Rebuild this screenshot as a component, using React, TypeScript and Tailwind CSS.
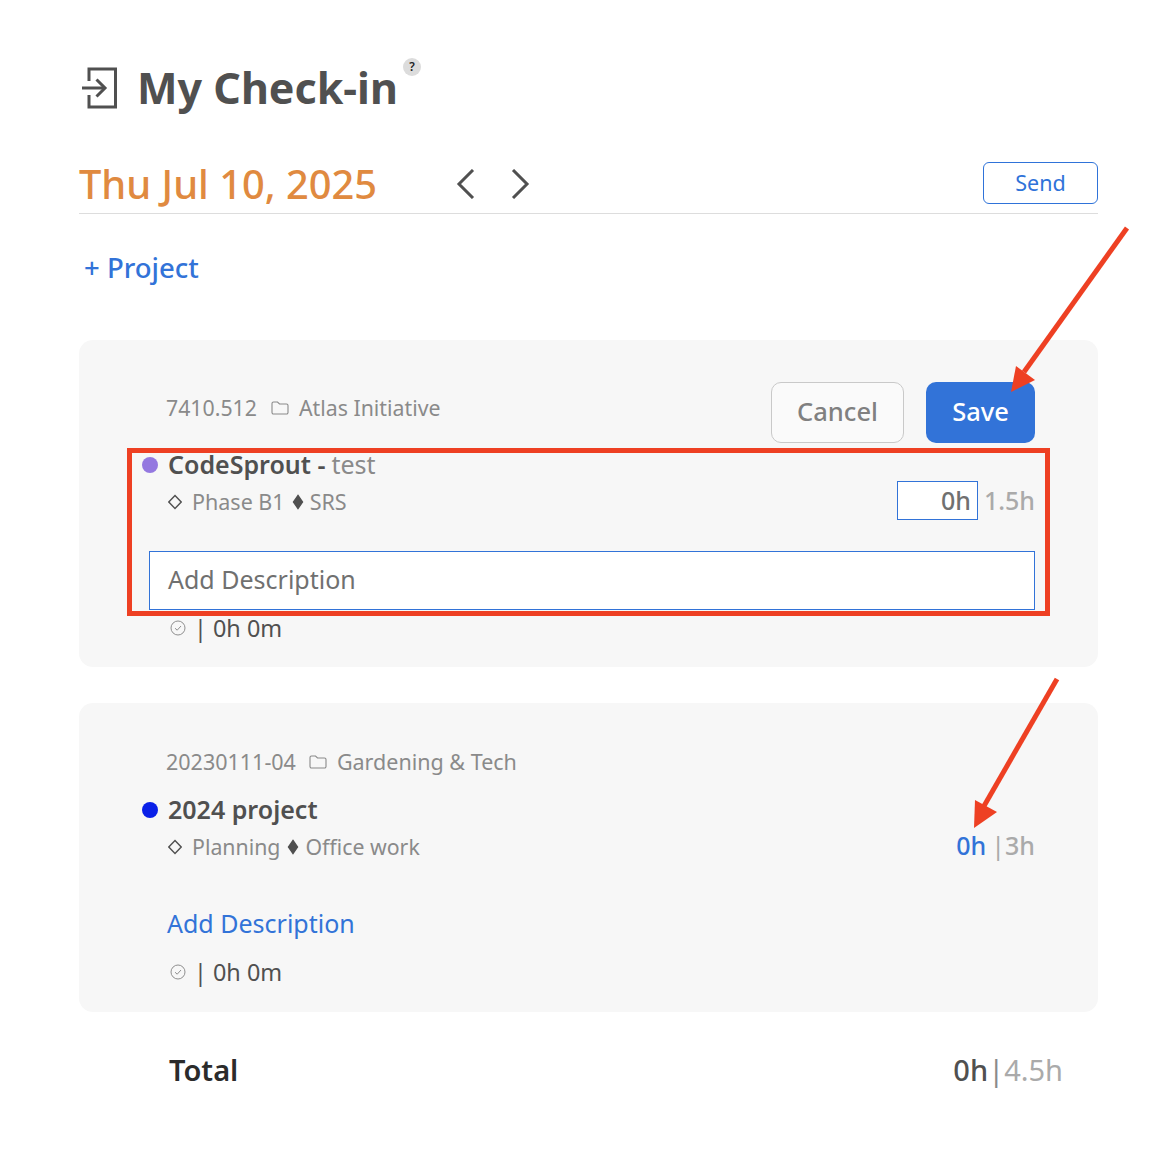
const font = { fontFamily: '"Noto Sans", sans-serif' };

function CheckInIcon() {
  return (
    <svg width="36" height="42" viewBox="0 0 36 42" fill="none" stroke="#505050" strokeWidth="3">
      <path d="M7 14 V2 H33.5 V40 H7 V28" />
      <path d="M0 21 H23" />
      <path d="M14.5 12.5 L23 21 L14.5 29.5" />
    </svg>
  );
}

function Chevron({ flip }: { flip?: boolean }) {
  return (
    <svg width="19" height="30" viewBox="0 0 19 30" fill="none" stroke="#505050" strokeWidth="3">
      <path d={flip ? "M2 1 L16 15 L2 29" : "M17 1 L3 15 L17 29"} />
    </svg>
  );
}

function FolderIcon() {
  return (
    <svg width="18" height="16" viewBox="0 0 18 16" fill="none" stroke="#8a8a8a" strokeWidth="1.1">
      <path d="M1 3.5 A1.5 1.5 0 0 1 2.5 2 H6.5 L8.5 4 H15.5 A1.5 1.5 0 0 1 17 5.5 V12.5 A1.5 1.5 0 0 1 15.5 14 H2.5 A1.5 1.5 0 0 1 1 12.5 Z" />
    </svg>
  );
}

function Diamond({ filled }: { filled?: boolean }) {
  return (
    <svg width="14" height="16" viewBox="0 0 14 16" fill={filled ? "#505050" : "none"} stroke="#505050" strokeWidth="1.4">
      {filled ? <path d="M7 1.5 L11.5 8 L7 14.5 L2.5 8 Z" /> : <path d="M7 1.5 L13.2 8 L7 14.5 L0.8 8 Z" />}
    </svg>
  );
}

function CheckCircle() {
  return (
    <svg width="16" height="16" viewBox="0 0 16 16" fill="none" stroke="#8f8f8f" strokeWidth="1">
      <circle cx="8" cy="8" r="7" />
      <path d="M5 8.2 L7.2 10.2 L11 6" />
    </svg>
  );
}

function Spent() {
  return (
    <div className="flex items-center h-[30px] leading-[30px] text-[#505050]">
      <span className="w-[20px] ml-[2px] flex items-center"><CheckCircle /></span>
      <span className="ml-[4px] text-[23.4px]">| 0h 0m</span>
    </div>
  );
}

function Phases({ a, b, size }: { a: string; b: string; size: string }) {
  return (
    <div className={`flex items-center leading-[30px] text-[#8a8a8a] ${size}`}>
      <Diamond />
      <span className="ml-[10px]">{a}</span>
      <span className="ml-[6px] mr-[5px] flex"><Diamond filled /></span>
      <span>{b}</span>
    </div>
  );
}

export default function App() {
  return (
    <div className="relative w-[1150px] h-[1162px] bg-white overflow-hidden" style={font}>
      <div className="pl-[79px] pr-[52px] pt-[61px]">
        <div className="flex items-center h-[54px]">
          <span className="ml-[3px] flex"><CheckInIcon /></span>
          <h1 className="ml-[19px] text-[43px] leading-[54px] font-bold text-[#505050]">My Check-in</h1>
          <span className="self-start -mt-[3px] ml-[5px] w-[18px] h-[18px] rounded-full bg-[#dcdcdc] text-[#222] text-[12px] leading-[18px] text-center font-semibold">?</span>
        </div>

        <div className="mt-[40px] flex items-center h-[59px] border-b border-[#dddddd]">
          <span className="text-[39.8px] leading-[58px] text-[#e08a40] font-medium w-[377px]">Thu Jul 10, 2025</span>
          <Chevron />
          <span className="ml-[36px] flex"><Chevron flip /></span>
          <button className="ml-auto mb-[3px] w-[115px] h-[42px] bg-white border border-[#2f73d9] rounded-[6px] text-[#2f73d9] text-[21.5px] leading-[40px]">Send</button>
        </div>

        <div className="mt-[34px] ml-[5px] h-[40px] text-[27.5px] leading-[40px] font-medium text-[#3273d8]">+ Project</div>

        <section className="mt-[52px] h-[327px] rounded-[14px] bg-[#f7f7f7] pl-[63px] pr-[63px] pt-[42px]">
          <div className="flex items-start justify-between">
            <div className="flex items-center pl-[24px] h-[52px] text-[21.3px] text-[#8a8a8a]">
              <span>7410.512</span>
              <span className="ml-[14px] flex"><FolderIcon /></span>
              <span className="ml-[10px]">Atlas Initiative</span>
            </div>
            <div className="flex gap-[22px]">
              <button className="w-[133px] h-[61px] pb-[2px] rounded-[10px] border border-[#c9c9c9] bg-[#fafafa] text-[#808080] text-[25.5px] font-medium">Cancel</button>
              <button className="w-[109px] h-[61px] pb-[2px] rounded-[10px] bg-[#3273d8] text-white text-[25.5px] font-medium">Save</button>
            </div>
          </div>
          <div className="mt-[2px] flex items-center h-[40px]">
            <span className="w-[16px] h-[16px] rounded-full bg-[#9478e0] mr-[10px]" />
            <span className="text-[25px] font-semibold text-[#505050]">CodeSprout -</span>
            <span className="ml-[6px] text-[25px] text-[#8a8a8a]">test</span>
          </div>
          <div className="flex items-center justify-between pl-[26px] -mt-[4px]">
            <div className="pt-[2px]"><Phases a="Phase B1" b="SRS" size="text-[21.5px]" /></div>
            <div className="flex items-center">
              <div className="w-[81px] h-[39px] border border-[#3273d8] bg-white text-right pr-[6px] text-[25px] leading-[37px] font-medium text-[#707070]">0h</div>
              <span className="ml-[6px] text-[25px] font-medium text-[#aaaaaa]">1.5h</span>
            </div>
          </div>
          <div className="mt-[31px] ml-[7px] h-[59px] border border-[#3273d8] bg-white pl-[18px] text-[25px] leading-[55px] text-[#707070]">Add Description</div>
          <div className="mt-[3px] pl-[26px]"><Spent /></div>
        </section>

        <section className="mt-[36px] h-[309px] rounded-[14px] bg-[#f7f7f7] pl-[63px] pr-[63px] pt-[44px]">
          <div className="flex items-center pl-[24px] h-[30px] text-[21.5px] text-[#8a8a8a]">
            <span>20230111-04</span>
            <span className="ml-[13px] flex"><FolderIcon /></span>
            <span className="ml-[10px]">Gardening &amp; Tech</span>
          </div>
          <div className="mt-[13px] flex items-center h-[40px]">
            <span className="w-[16px] h-[16px] rounded-full bg-[#0a20e8] mr-[10px]" />
            <span className="text-[25px] font-semibold text-[#505050]">2024 project</span>
          </div>
          <div className="flex items-center justify-between pl-[26px] h-[34px]">
            <Phases a="Planning" b="Office work" size="text-[21.3px]" />
            <div className="text-[25px] font-medium text-[#aaaaaa] -mt-[2px] flex">
              <span className="text-[#3273d8]">0h</span>
              <span className="font-normal ml-[5px]">|</span>
              <span>3h</span>
            </div>
          </div>
          <div className="mt-[39px] pl-[25px] h-[40px] text-[25px] leading-[40px] text-[#3273d8]">Add Description</div>
          <div className="mt-[14px] pl-[26px]"><Spent /></div>
        </section>

        <div className="mt-[38px] pl-[90px] pr-[35px] flex items-center justify-between h-[40px] text-[29px]">
          <span className="font-semibold text-[#2b2b2b]">Total</span>
          <span className="font-medium text-[#505050]">0h<span className="font-normal text-[#8a8a8a]">|</span><span className="font-normal text-[#aaaaaa]">4.5h</span></span>
        </div>
      </div>

      {/* review markup drawn over the screenshot */}
      <div className="absolute left-[127px] top-[448px] w-[923px] h-[168px] border-[5px] border-[#ee4023]" />
      <svg className="absolute left-0 top-0" width="1150" height="1162" fill="none">
        <path d="M1127 228 L1024 372" stroke="#ee4023" strokeWidth="5" />
        <path d="M1011 392 L1016 366 L1035 380 Z" fill="#ee4023" />
        <path d="M1057 679 L984 806" stroke="#ee4023" strokeWidth="5" />
        <path d="M974 828 L975 800 L997 812 Z" fill="#ee4023" />
      </svg>
    </div>
  );
}
